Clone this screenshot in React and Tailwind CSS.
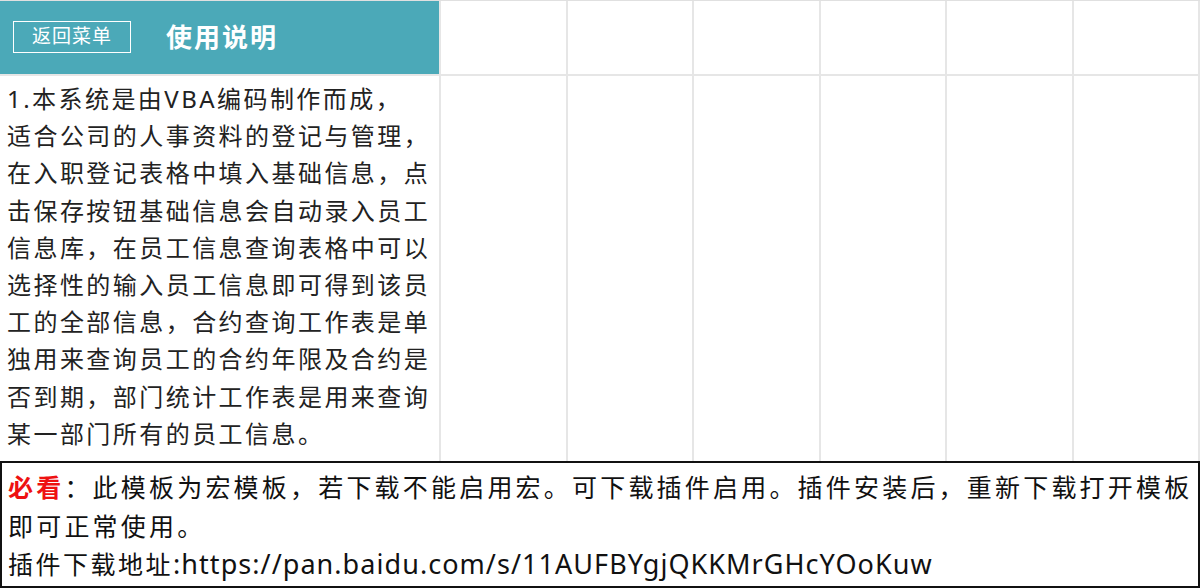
const cjk = "font-['Noto_Sans','Noto_Sans_CJK_SC',sans-serif]";

const bodyLines = [
  '1.本系统是由VBA编码制作而成，',
  '适合公司的人事资料的登记与管理，',
  '在入职登记表格中填入基础信息，点',
  '击保存按钮基础信息会自动录入员工',
  '信息库，在员工信息查询表格中可以',
  '选择性的输入员工信息即可得到该员',
  '工的全部信息，合约查询工作表是单',
  '独用来查询员工的合约年限及合约是',
  '否到期，部门统计工作表是用来查询',
  '某一部门所有的员工信息。',
];

const cell = 'border-r-2 border-b-2 border-[#e6e6e6] bg-white';

export default function App() {
  return (
    <div className={`w-[1200px] h-[588px] bg-white overflow-hidden flex flex-col ${cjk}`}>
      <div className="grid grid-cols-[441px_repeat(6,1fr)] grid-rows-[75px_385px] border-t border-[#e0e0e0]">
        {/* header */}
        <div className="border-r-2 border-b-2 border-[#e6e6e6] bg-[#4ba9b8] flex items-center pl-[13px] pb-[2px]">
          <div className="w-[118px] h-[32px] border-[1.5px] border-white flex items-center justify-center text-white text-[19px] leading-none tracking-[1px]">
            返回菜单
          </div>
          <div className="ml-[35px] text-white text-[26px] font-bold leading-none tracking-[2px]">使用说明</div>
        </div>
        {[0, 1, 2, 3, 4, 5].map((i) => (
          <div key={'h' + i} className={cell} />
        ))}

        {/* description */}
        <div className="border-r-2 border-[#e6e6e6] pl-[7px] pt-[4px] text-[24px] leading-[37.2px] tracking-[2.45px] text-[#222] whitespace-nowrap">
          {bodyLines.map((l) => (
            <div key={l}>{l}</div>
          ))}
        </div>
        {[0, 1, 2, 3, 4, 5].map((i) => (
          <div key={'b' + i} className="border-r-2 border-[#e6e6e6] bg-white" />
        ))}
      </div>

      {/* notice */}
      <div className="h-[128px] border-2 border-[#111] pl-[6px] pt-[5px] text-[25px] leading-[38.5px] tracking-[3.2px] text-[#111] whitespace-nowrap">
        <div>
          <span className="text-[#ee1111] font-bold">必看</span>：此模板为宏模板，若下载不能启用宏。可下载插件启用。插件安装后，重新下载打开模板
        </div>
        <div>即可正常使用。</div>
        <div className="tracking-[2.5px]">
          插件下载地址
          <span className="text-[27px] tracking-[1.05px]">:https://pan.baidu.com/s/11AUFBYgjQKKMrGHcYOoKuw</span>
        </div>
      </div>
    </div>
  );
}
